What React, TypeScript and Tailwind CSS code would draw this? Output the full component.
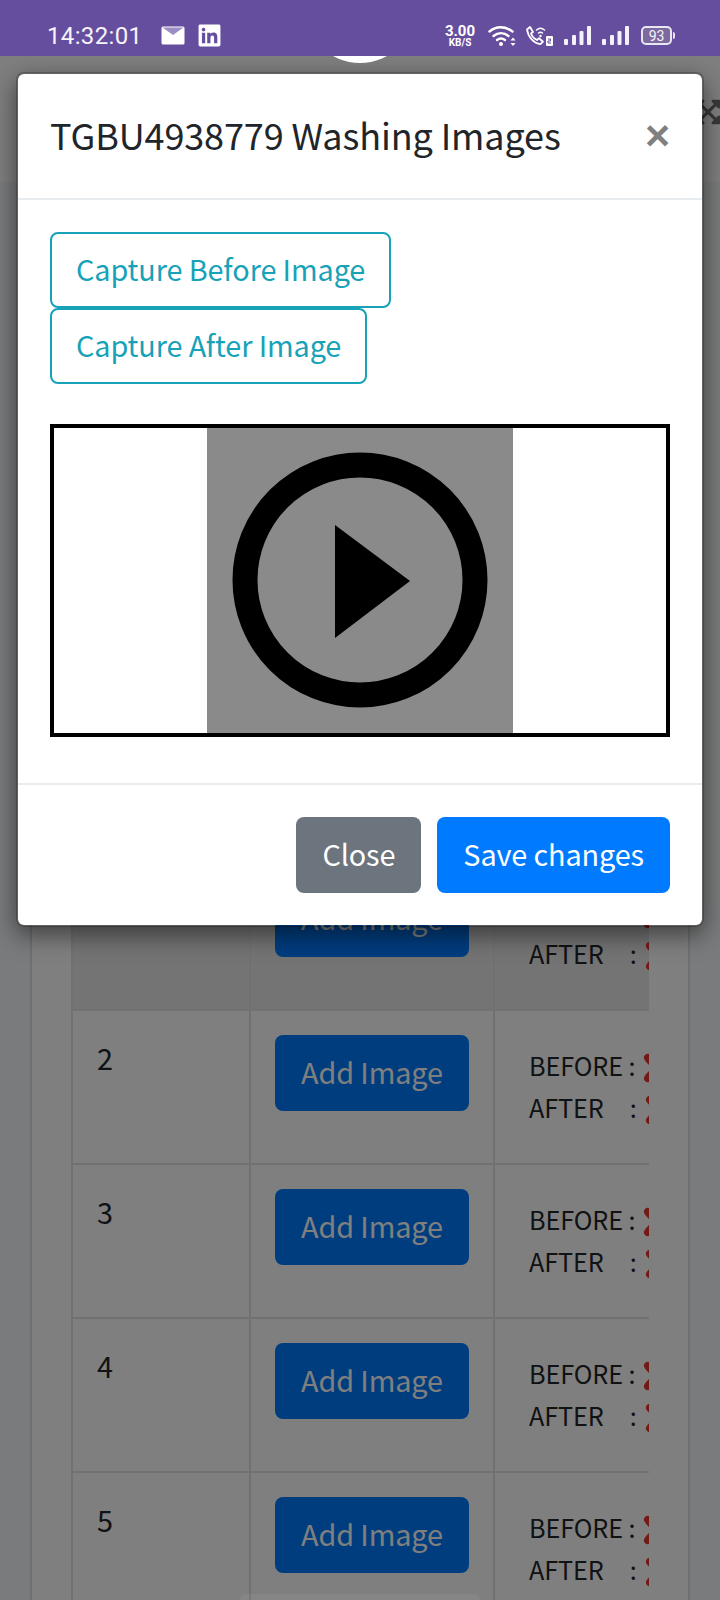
import { FaExpandArrowsAlt, FaLinkedin } from 'react-icons/fa';

const FONT = 'font-["Noto_Sans_CJK_SC","Source_Sans_Pro",sans-serif]';

function SignalBars() {
  return (
    <svg width="27" height="20" viewBox="0 0 27 20" fill="#f4f2f8">
      <rect x="0" y="13" width="4" height="6" rx="1" />
      <rect x="8" y="9" width="4" height="10" rx="1" />
      <rect x="15.5" y="5" width="4" height="14" rx="1" />
      <rect x="23" y="0" width="4" height="19" rx="1" />
    </svg>
  );
}

function WifiIcon() {
  return (
    <svg width="28" height="22" viewBox="0 0 28 22" fill="none" stroke="#fff" strokeWidth="2.4" strokeLinecap="round">
      <path d="M1.5 6.5C8 0.8 17 0.8 24.5 6.5" />
      <path d="M5.5 11C10 7.2 16 7.2 20.5 11" />
      <path d="M9 15C11.5 13 14.5 13 17 15" />
      <circle cx="13" cy="19" r="2" fill="#fff" stroke="none" />
      <path d="M25 12.5l2.5 3h-5zM25 21l2.5-3h-5z" fill="#fff" stroke="none" />
    </svg>
  );
}

function CallIcon() {
  return (
    <svg width="28" height="22" viewBox="0 0 28 22" fill="none" stroke="#fff" strokeWidth="1.8" strokeLinecap="round">
      <path d="M2 4.5L5 2l3 5-2 1.5c1 3 3 5 6 6.5l2-1.8 4 3.5-2.5 2.5C9 18.5 3 12 2 4.5z" strokeLinejoin="round" />
      <path d="M11.5 5C14 2.8 17 2.8 19.5 5" strokeWidth="1.5" />
      <path d="M13.5 8C14.8 7 16.2 7 17.5 8" strokeWidth="1.5" />
      <circle cx="15.5" cy="11" r="1.2" fill="#fff" stroke="none" />
      <rect x="21" y="11" width="7" height="10" rx="1" fill="#fff" stroke="none" />
      <path d="M23 14h2.5v2H23v2h3" stroke="#664e9f" strokeWidth="1" strokeLinecap="butt" fill="none" />
    </svg>
  );
}

function MailIcon() {
  return (
    <svg width="24" height="19" viewBox="0 0 24 19">
      <rect x="0.5" y="0.5" width="23" height="18" rx="1.5" fill="#fff" />
      <path d="M1.5 1.5L12 9l10.5-7.5z" fill="#9d8dc4" />
      <path d="M1 2.5L12 10.5 23 2.5" fill="none" stroke="#fff" strokeWidth="1" />
    </svg>
  );
}

function StatusBar() {
  return (
    <div className="relative z-30 flex h-14 items-center bg-[#664e9f] pl-[47px] pr-[48px] pt-[15px] text-white">
      <span className="font-['Roboto',sans-serif] text-[24px] leading-none tracking-[0.35px] text-[#f6f4fa]">14:32:01</span>
      <span className="ml-[19px]"><MailIcon /></span>
      <FaLinkedin className="ml-[12px] text-[#fff]" size={25} />
      <div className="ml-auto flex items-center">
        <div className="flex w-[34px] flex-col items-center font-['Roboto',sans-serif] font-bold leading-none">
          <span className="text-[15px] leading-[14px]">3.00</span>
          <span className="text-[10px] leading-[10px]">KB/S</span>
        </div>
        <span className="ml-[11px]"><WifiIcon /></span>
        <span className="ml-[9px]"><CallIcon /></span>
        <span className="ml-[11px]"><SignalBars /></span>
        <span className="ml-[11px]"><SignalBars /></span>
        <div className="relative ml-[12px] flex h-[19px] w-[31px] items-center justify-center rounded-[5px] border-2 border-[#e9e5f1] bg-[#7c6a9e] font-['Roboto',sans-serif] text-[14px] leading-none text-[#f6f4fa]">
          93
          <span className="absolute -right-[5px] top-[4px] h-[7px] w-[2px] rounded-r bg-[#e9e5f1]" />
        </div>
      </div>
    </div>
  );
}

function CrossMark() {
  return (
    <svg width="34" height="34" viewBox="0 0 34 34" className="ml-[5px] inline-block align-[-9px]">
      <path d="M5 4C8 1 10 3 17 11 24 3 26 1 29 4 32 7 29 10 22 17 29 24 32 27 29 30 26 33 24 31 17 23 10 31 8 33 5 30 2 27 5 24 12 17 5 10 2 7 5 4z" fill="#e8342a" />
    </svg>
  );
}

function Row({ n }: { n: number }) {
  return (
    <tr className={n === 1 ? 'h-[154px] bg-black/[.09]' : 'h-[154px]'}>
      <td className="border-2 border-[#dee2e6] px-6 pb-6 pt-[23px] align-top text-[28.8px] leading-[48px]">{n}</td>
      <td className="border-2 border-[#dee2e6] p-6 align-top">
        <button className="block h-[76px] w-[194px] rounded-lg bg-[#007bff] pb-[2px] text-[28.8px] tracking-[-0.1px] text-white">Add Image</button>
      </td>
      <td className="border-2 border-[#dee2e6] pl-[34px] pt-[33px] align-top text-[25.2px] leading-[42px] tracking-[-0.1px]">
        <div className="whitespace-pre">BEFORE :<CrossMark /></div>
        <div className="whitespace-pre">{'AFTER    '}<span className="ml-[4px]">:</span><CrossMark /></div>
      </td>
    </tr>
  );
}

function Page() {
  return (
    <div className="bg-[#f4f6f9] text-[#212529]">
      <div className="relative flex h-[126px] items-center justify-end overflow-hidden bg-white">
        <FaExpandArrowsAlt className="-mr-[2px] mb-[14px] text-[#707070]" size={28} />
      </div>
      <div className="px-[30px] pt-[300px]">
        <div className="h-[1200px] border-x-2 border-black/[.125] bg-white pl-[39px] pr-[40px] pt-[373px]">
          <div className="w-[578px] overflow-hidden">
            <table className="w-[660px] table-fixed border-collapse">
              <colgroup>
                <col className="w-[178px]" />
                <col className="w-[244px]" />
                <col className="w-[238px]" />
              </colgroup>
              <tbody>
                {[1, 2, 3, 4, 5].map((n) => (
                  <Row key={n} n={n} />
                ))}
              </tbody>
            </table>
          </div>
        </div>
      </div>
    </div>
  );
}

function VideoBox() {
  return (
    <div className="mt-10 flex h-[313px] w-[620px] justify-center border-4 border-black bg-white">
      <div className="flex h-[305px] w-[306px] items-center justify-center bg-[#8a8a8a]">
        <svg width="306" height="305" viewBox="0 0 306 305">
          <circle cx="153" cy="152" r="115" fill="none" stroke="#000" strokeWidth="25" />
          <path d="M128 97L203 153 128 210z" fill="#000" />
        </svg>
      </div>
    </div>
  );
}

export default function App() {
  return (
    <div className={`relative h-[1600px] w-[720px] overflow-hidden ${FONT}`}>
      <StatusBar />
      <Page />

      {/* backdrop */}
      <div className="absolute inset-0 z-10 bg-black/50 px-4 pt-[72px]">
        <div className="rounded-lg border-2 border-black/20 bg-white bg-clip-padding text-[#212529] shadow-[0_8px_24px_rgba(0,0,0,.5)]">
          <div className="flex h-[126px] items-start justify-between border-b-2 border-[#e9ecef] px-8 pb-8 pt-[30px]">
            <h5 className="whitespace-nowrap text-[36px] leading-[60px] tracking-[-0.12px]">TGBU4938779 Washing Images</h5>
            <button className="mt-[2px] font-['Liberation_Sans',sans-serif] text-[43px] font-bold leading-[58px] text-[#808080]">×</button>
          </div>
          <div className="px-8 pb-[46px] pt-8">
            <button className="block h-[76px] rounded-lg border-2 border-[#17a2b8] px-6 pb-[3px] text-[28.8px] tracking-[-0.1px] text-[#17a2b8]">Capture Before Image</button>
            <button className="block h-[76px] rounded-lg border-2 border-[#17a2b8] px-6 pb-[3px] text-[28.8px] tracking-[-0.1px] text-[#17a2b8]">Capture After Image</button>
            <VideoBox />
          </div>
          <div className="flex justify-end gap-4 border-t-2 border-[#e9ecef] p-8">
            <button className="h-[76px] rounded-lg bg-[#6c757d] px-[26px] pb-[2px] text-[28.8px] tracking-[-0.1px] text-white">Close</button>
            <button className="h-[76px] rounded-lg bg-[#007bff] px-[26px] pb-[2px] text-[28.8px] tracking-[-0.1px] text-white">Save changes</button>
          </div>
        </div>
      </div>

      {/* logo circle and floating bar sit above the backdrop */}
      <span className="absolute -top-[49px] left-[304px] z-20 h-[112px] w-[112px] rounded-full bg-white" />
      <div className="absolute left-[240px] top-[1594px] z-20 h-10 w-[240px] rounded-md bg-white/5" />
    </div>
  );
}
